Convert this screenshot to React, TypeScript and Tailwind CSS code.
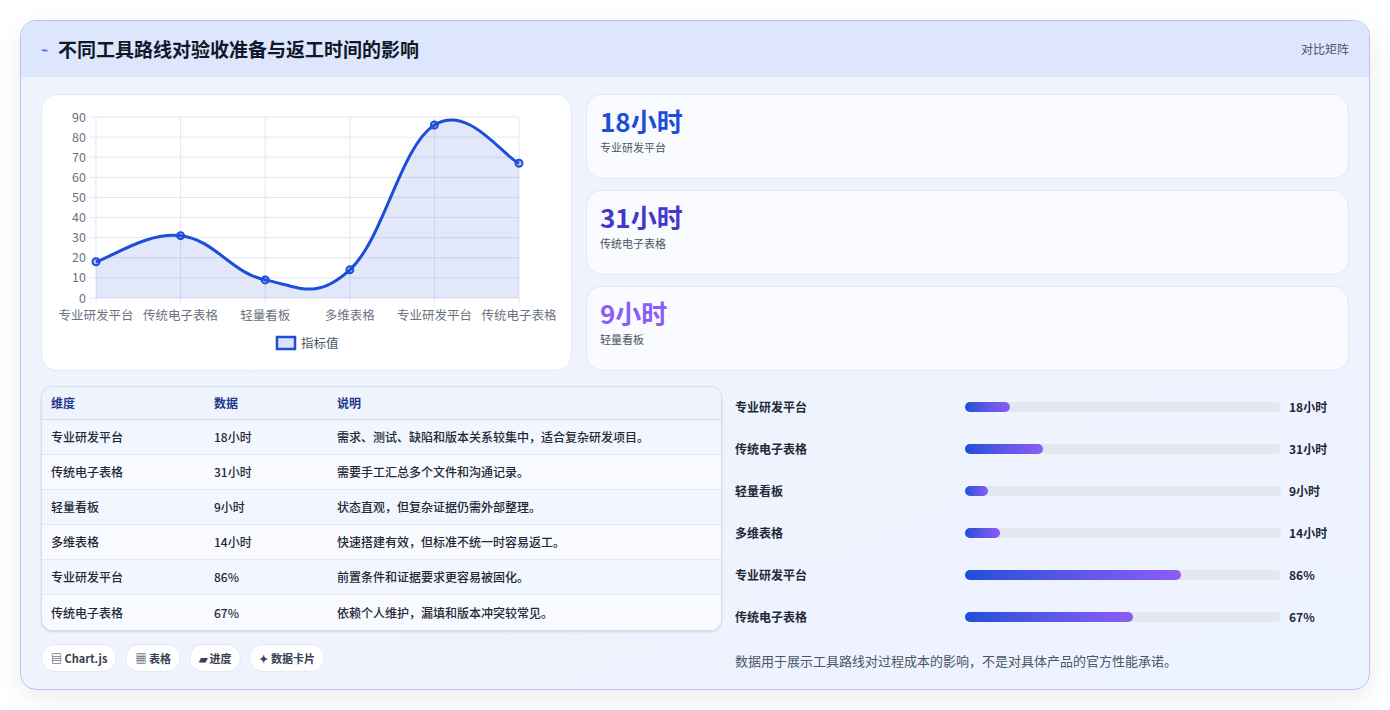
import React from "react";

const labels = ["专业研发平台", "传统电子表格", "轻量看板", "多维表格", "专业研发平台", "传统电子表格"];
const values = [18, 31, 9, 14, 86, 67];
const display = ["18小时", "31小时", "9小时", "14小时", "86%", "67%"];
const notes = [
  "需求、测试、缺陷和版本关系较集中，适合复杂研发项目。",
  "需要手工汇总多个文件和沟通记录。",
  "状态直观，但复杂证据仍需外部整理。",
  "快速搭建有效，但标准不统一时容易返工。",
  "前置条件和证据要求更容易被固化。",
  "依赖个人维护，漏填和版本冲突较常见。",
];

const font = { fontFamily: '"Noto Sans CJK SC", "Noto Sans", sans-serif' };

function Chart() {
  const x0 = 54, x1 = 477, yTop = 22, yBot = 203;
  const xs = values.map((_, i) => x0 + ((x1 - x0) / 5) * i);
  const ys = values.map((v) => yBot - (v / 90) * (yBot - yTop));
  const t = 0.4;
  let d = `M${xs[0]},${ys[0]}`;
  for (let i = 0; i < 5; i++) {
    const p0 = [xs[Math.max(i - 1, 0)], ys[Math.max(i - 1, 0)]];
    const p1 = [xs[i], ys[i]];
    const p2 = [xs[i + 1], ys[i + 1]];
    const p3 = [xs[Math.min(i + 2, 5)], ys[Math.min(i + 2, 5)]];
    const c1 = [p1[0] + ((p2[0] - p0[0]) * t) / 2, p1[1] + ((p2[1] - p0[1]) * t) / 2];
    const c2 = [p2[0] - ((p3[0] - p1[0]) * t) / 2, p2[1] - ((p3[1] - p1[1]) * t) / 2];
    d += ` C${c1[0]},${c1[1]} ${c2[0]},${c2[1]} ${p2[0]},${p2[1]}`;
  }
  const area = `${d} L${x1},${yBot} L${x0},${yBot} Z`;
  return (
    <svg width="531" height="275" style={font}>
      {Array.from({ length: 10 }).map((_, i) => {
        const y = yBot - ((yBot - yTop) / 9) * i;
        return (
          <g key={i}>
            <line x1={x0 - 6} x2={x1} y1={y} y2={y} stroke="#e2e6ee" />
            <text x={x0 - 10} y={y + 4.5} textAnchor="end" fontSize="12.5" fill="#6b7280">{i * 10}</text>
          </g>
        );
      })}
      {xs.map((x, i) => (
        <g key={i}>
          <line x1={x} x2={x} y1={yTop} y2={yBot + 5} stroke="#e2e6ee" />
          <text x={x} y={225} textAnchor="middle" fontSize="12.5" fill="#6b7280">{labels[i]}</text>
        </g>
      ))}
      <path d={area} fill="rgba(29,78,216,0.13)" />
      <path d={d} fill="none" stroke="#1d4ed8" strokeWidth="3" />
      {xs.map((x, i) => (
        <circle key={i} cx={x} cy={ys[i]} r="3.5" fill="rgba(29,78,216,0.3)" stroke="#1d4ed8" strokeWidth="2" />
      ))}
      <rect x="235" y="242" width="18" height="12" fill="#dbe3fb" stroke="#1d4ed8" strokeWidth="2.5" />
      <text x="259" y="252.5" fontSize="12.5" fill="#4b5563">指标值</text>
    </svg>
  );
}

export default function App() {
  const stats = [
    { v: "18小时", l: "专业研发平台", c: "text-[#1d4ed8]" },
    { v: "31小时", l: "传统电子表格", c: "text-[#4338ca]" },
    { v: "9小时", l: "轻量看板", c: "text-[#8b5cf6]" },
  ];
  return (
    <div className="w-[1390px] h-[710px] bg-white p-5" style={font}>
      <div className="h-[670px] w-[1350px] rounded-2xl border border-[#b9c3ee] overflow-hidden bg-gradient-to-br from-[#f1f4fe] to-[#edf3ff] shadow-[0_8px_24px_rgba(0,0,0,0.08)]">
        <div className="h-[56px] bg-[#dee6fe] flex items-center justify-between pl-5 pr-5">
          <div className="flex items-center gap-[10px]">
            <span className="text-[#3b5bdb] text-xs">⌁</span>
            <span className="text-[19px] font-bold text-[#111827]">不同工具路线对验收准备与返工时间的影响</span>
          </div>
          <span className="text-xs text-[#4b5563]">对比矩阵</span>
        </div>
        <div className="px-5 pt-[17px]">
          <div className="flex gap-[14px]">
            <div className="w-[531px] h-[277px] bg-white rounded-2xl border border-[#e3e8f4]">
              <Chart />
            </div>
            <div className="flex-1 flex flex-col gap-[11px]">
              {stats.map((s) => (
                <div key={s.v} className="h-[85px] rounded-2xl bg-[#f9fbff] border border-[#e0e7f6] px-[13px] pt-[8px]">
                  <div className={`text-[26px] font-bold leading-[36px] ${s.c}`}>{s.v}</div>
                  <div className="text-[11px] text-[#4b5563]">{s.l}</div>
                </div>
              ))}
            </div>
          </div>
          <div className="flex mt-[15px]">
            <div className="w-[681px]">
              <div className="rounded-xl border border-[#d6dcea] overflow-hidden bg-white shadow-sm">
                <div className="flex h-[33px] items-center bg-[#eef3fe] border-b border-[#d6dcea] text-xs font-semibold text-[#1e3a8a]">
                  <div className="w-[172px] pl-[9px]">维度</div>
                  <div className="w-[123px]">数据</div>
                  <div>说明</div>
                </div>
                {labels.map((l, i) => (
                  <div key={i} className={`flex h-[35px] items-center text-xs font-medium text-[#1f2937] ${i < 5 ? "border-b border-[#e3e8f2]" : ""} ${i % 2 === 0 ? "bg-[#f2f6fe]" : "bg-[#f8faff]"}`}>
                    <div className="w-[172px] pl-[9px]">{l}</div>
                    <div className="w-[123px]">{display[i]}</div>
                    <div>{notes[i]}</div>
                  </div>
                ))}
              </div>
              <div className="flex gap-2 mt-[13px]">
                {["▤ Chart.js", "▦ 表格", "▰ 进度", "✦ 数据卡片"].map((p) => (
                  <span key={p} className="h-[28px] px-[9px] flex items-center rounded-full bg-white border border-[#e5e9f2] text-[11px] font-semibold text-[#374151]">{p}</span>
                ))}
              </div>
            </div>
            <div className="flex-1 pl-[13px]">
              {labels.map((l, i) => (
                <div key={i} className="flex items-center h-[42px] text-xs font-semibold text-[#1f2937]">
                  <div className="w-[230px]">{l}</div>
                  <div className="w-[316px] h-[10px] rounded-full bg-[#e3e7f0]">
                    <div className="h-full rounded-full bg-gradient-to-r from-[#1d4ed8] to-[#8b5cf6]" style={{ width: `${(values[i] / 126) * 100}%` }} />
                  </div>
                  <div className="pl-2">{display[i]}</div>
                </div>
              ))}
              <div className="mt-[13px] text-[13px] text-[#4b5563]">数据用于展示工具路线对过程成本的影响，不是对具体产品的官方性能承诺。</div>
            </div>
          </div>
        </div>
      </div>
    </div>
  );
}
